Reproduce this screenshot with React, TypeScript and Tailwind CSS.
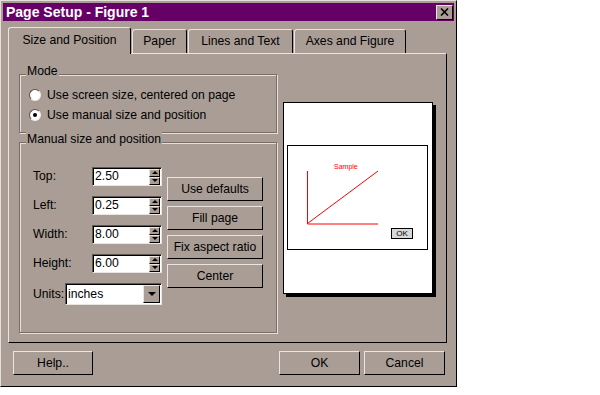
import React from "react";

const raised =
  "border border-t-[#ebe5e1] border-l-[#ebe5e1] border-r-black border-b-black";
const sunken =
  "border border-t-[#625852] border-l-[#625852] border-r-[#ebe5e1] border-b-[#ebe5e1] shadow-[inset_1px_1px_0_#000]";
const etched =
  "border border-[#786d67] shadow-[inset_1px_1px_0_#e6dfdb,1px_1px_0_#e6dfdb]";

function Tab({ label, width, active }: { label: string; width: string; active?: boolean }) {
  return (
    <div
      className={`${width} ml-[1px] flex items-center justify-center rounded-t-[3px] border-t border-l border-r border-t-[#ebe5e1] border-l-[#ebe5e1] border-r-black bg-[#a99d95] ${
        active ? "relative z-10 -mb-px h-[27px] pb-[2px]" : "h-[24px]"
      }`}
    >
      {label}
    </div>
  );
}

function GroupBox({
  title,
  className,
  children,
}: {
  title: string;
  className: string;
  children: React.ReactNode;
}) {
  return (
    <div className={`relative ${etched} ${className}`}>
      <span className="absolute top-[-11px] left-[6px] bg-[#a99d95] px-[1px] leading-[14px]">
        {title}
      </span>
      {children}
    </div>
  );
}

function Radio({ label, checked }: { label: string; checked?: boolean }) {
  return (
    <div className="flex h-[20px] items-center">
      <span className="flex h-[12px] w-[12px] items-center justify-center rounded-full border border-t-[#5a504b] border-l-[#5a504b] border-r-[#f0eae7] border-b-[#f0eae7] bg-white">
        {checked && <span className="h-[4px] w-[4px] rounded-full bg-black" />}
      </span>
      <span className="ml-[6px]">{label}</span>
    </div>
  );
}

function SpinBox({ label, value }: { label: string; value: string }) {
  return (
    <div className="flex h-[19px] items-center">
      <span className="w-[59px]">{label}</span>
      <div className={`flex h-[19px] w-[70px] items-center bg-white ${sunken}`}>
        <span className="flex-1 pl-[2px] leading-[15px]">{value}</span>
        <div className="mr-[1px] flex h-[16px] w-[11px] flex-col">
          <div className={`flex flex-1 items-center justify-center bg-[#a99d95] ${raised}`}>
            <span className="h-0 w-0 border-x-[3px] border-b-[3px] border-x-transparent border-b-black" />
          </div>
          <div className={`flex flex-1 items-center justify-center bg-[#a99d95] ${raised}`}>
            <span className="h-0 w-0 border-x-[3px] border-t-[3px] border-x-transparent border-t-black" />
          </div>
        </div>
      </div>
    </div>
  );
}

function Button({ label, className }: { label: string; className: string }) {
  return (
    <div className={`flex h-[24px] items-center justify-center bg-[#a99d95] ${raised} ${className}`}>
      {label}
    </div>
  );
}

function Preview() {
  return (
    <div className="ml-[6px] mt-[48px] h-[192px] w-[150px] border border-black bg-white shadow-[3px_3px_0_#000]">
      <div className="relative ml-[3px] mt-[42px] h-[105px] w-[141px] border border-black">
        <svg className="absolute inset-0" width="139" height="103" viewBox="0 0 139 103">
          <path d="M19.5 25v53H90M19.5 77.5L90 25" stroke="#ff0000" strokeWidth="1" fill="none" />
        </svg>
        <span className="absolute left-[46px] top-[17px] text-[7px] leading-[8px] text-[#ff0000]">Sample</span>
        <span className="absolute left-[103px] top-[82px] flex h-[11px] w-[22px] items-center justify-center border border-black bg-[#d8d8d8] text-[8px] leading-[9px]">
          OK
        </span>
      </div>
    </div>
  );
}

export default function App() {
  return (
    <div className="h-[395px] w-[600px] bg-white font-['Liberation_Sans',Arial,sans-serif] text-[12.2px] text-black">
      <div className="flex h-[387px] w-[457px] flex-col border border-t-[#e6dfdb] border-l-[#e6dfdb] border-r-black border-b-black bg-[#a99d95] p-[2px]">
        <div className="flex h-[18px] items-center bg-[#660066] pl-[3px] pr-[1px]">
          <span className="flex-1 text-[14px] font-bold leading-[16px] text-white">Page Setup - Figure 1</span>
          <div className={`flex h-[15px] w-[17px] items-center justify-center bg-[#a99d95] ${raised}`}>
            <svg width="9" height="8" viewBox="0 0 9 8">
              <path d="M1 0.5l7 7M8 0.5l-7 7" stroke="#000" strokeWidth="1.6" />
            </svg>
          </div>
        </div>

        <div className="ml-[4px] mt-[6px] flex h-[26px] items-end">
          <Tab label="Size and Position" width="w-[123px]" active />
          <Tab label="Paper" width="w-[55px]" />
          <Tab label="Lines and Text" width="w-[105px]" />
          <Tab label="Axes and Figure" width="w-[112px]" />
        </div>

        <div className="ml-[5px] flex h-[290px] w-[439px] border border-t-[#ebe5e1] border-l-[#ebe5e1] border-r-black border-b-black">
          <div className="flex flex-col pl-[10px] pt-[20px]">
            <GroupBox title="Mode" className="h-[59px] w-[258px] pl-[9px] pt-[10px]">
              <Radio label="Use screen size, centered on page" />
              <Radio label="Use manual size and position" checked />
            </GroupBox>
            <GroupBox title="Manual size and position" className="mt-[9px] flex h-[191px] w-[258px] pl-[13px] pt-[24px]">
              <div className="flex flex-col gap-[10px]">
                <SpinBox label="Top:" value="2.50" />
                <SpinBox label="Left:" value="0.25" />
                <SpinBox label="Width:" value="8.00" />
                <SpinBox label="Height:" value="6.00" />
                <div className="flex h-[22px] items-center">
                  <span className="w-[32px]">Units:</span>
                  <div className={`flex h-[22px] w-[97px] items-center bg-white ${sunken}`}>
                    <span className="flex-1 pl-[2px]">inches</span>
                    <div className={`mr-[1px] flex h-[18px] w-[17px] items-center justify-center bg-[#a99d95] ${raised}`}>
                      <span className="h-0 w-0 border-x-[4px] border-t-[4px] border-x-transparent border-t-black" />
                    </div>
                  </div>
                </div>
              </div>
              <div className="ml-[5px] mt-[10px] flex flex-col gap-[5px]">
                <Button label="Use defaults" className="w-[96px]" />
                <Button label="Fill page" className="w-[96px]" />
                <Button label="Fix aspect ratio" className="w-[96px]" />
                <Button label="Center" className="w-[96px]" />
              </div>
            </GroupBox>
          </div>
          <Preview />
        </div>

        <div className="mt-[8px] flex">
          <Button label="Help.." className="ml-[10px] w-[80px]" />
          <Button label="OK" className="ml-auto w-[81px]" />
          <Button label="Cancel" className="ml-[4px] mr-[9px] w-[81px]" />
        </div>
      </div>
    </div>
  );
}
